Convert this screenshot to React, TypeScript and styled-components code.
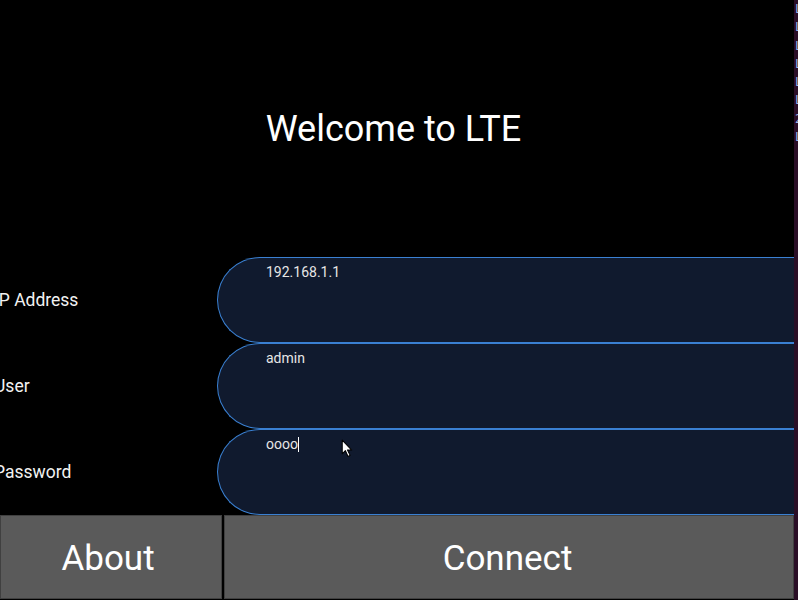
import React from "react";
import styled, { createGlobalStyle } from "styled-components";

const GlobalStyle = createGlobalStyle`
  html, body {
    margin: 0;
    padding: 0;
    background: #000;
    overflow: hidden;
  }
  body {
    font-family: Roboto, "Liberation Sans", sans-serif;
  }
`;

const Screen = styled.div`
  display: flex;
  width: 798px;
  height: 600px;
  background: #000;
  overflow: hidden;
`;

const Window = styled.div`
  position: relative;
  width: 794px;
  height: 600px;
  display: flex;
  flex-direction: column;
  overflow: hidden;
  color: #fff;
`;

const TitleArea = styled.div`
  height: 257px;
  display: flex;
  align-items: center;
  justify-content: center;
  padding-right: 7px;
  box-sizing: border-box;
`;

const Title = styled.h1`
  margin: 0;
  font-weight: 400;
  font-size: 36px;
  color: #fff;
`;

const Form = styled.div`
  display: flex;
  flex-direction: column;
`;

const Row = styled.div`
  display: flex;
  height: 86px;
`;

const Label = styled.div`
  width: 217px;
  flex-shrink: 0;
  display: flex;
  align-items: center;
  margin-left: -6px;
  font-size: 17.5px;
  color: #f2f2f2;
`;

const Field = styled.div`
  flex: 1;
  margin-left: 6px;
  margin-right: -10px;
  box-sizing: border-box;
  height: 86px;
  background: #101a2e;
  border: 1px solid #3a80d2;
  border-right: none;
  border-radius: 43px 0 0 43px;
  padding: 6px 0 0 48px;
  font-size: 14px;
  color: #e6e6e6;
`;

const Caret = styled.span`
  display: inline-block;
  width: 1px;
  height: 15px;
  background: #fff;
  vertical-align: -3px;
`;

const ButtonBar = styled.div`
  display: flex;
  gap: 2px;
  height: 84px;
`;

const Button = styled.button<{ $grow?: boolean }>`
  ${(p) => (p.$grow ? "flex: 1;" : "width: 222px;")}
  height: 84px;
  margin: 0;
  background: #5a5a5a;
  border: 1px solid #404040;
  color: #fff;
  font-family: Roboto, "Liberation Sans", sans-serif;
  font-size: 35px;
  padding: 2px ${(p) => (p.$grow ? "3px" : "6px")} 0 0;
`;

const Pointer = styled.svg`
  position: absolute;
  left: 341px;
  top: 439px;
`;

const Strip = styled.div`
  width: 4px;
  height: 600px;
  background: #2a0e26;
  overflow: hidden;
  display: flex;
  flex-direction: column;
`;

const StripLine = styled.div`
  height: 18.3px;
  line-height: 18.3px;
  margin-left: 1px;
  font-family: "DejaVu Sans Mono", monospace;
  font-size: 12px;
  color: #9fb4ea;
  white-space: nowrap;
`;

const stripLines = ["L", "L", "L", "L", "L", "L", "2", "L"];

const App = () => {
  return (
    <>
      <GlobalStyle />
      <Screen>
        <Window>
          <TitleArea>
            <Title>Welcome to LTE</Title>
          </TitleArea>
          <Form>
            <Row>
              <Label>IP Address</Label>
              <Field>192.168.1.1</Field>
            </Row>
            <Row>
              <Label>User</Label>
              <Field>admin</Field>
            </Row>
            <Row>
              <Label>Password</Label>
              <Field>
                oooo<Caret />
              </Field>
            </Row>
          </Form>
          <ButtonBar>
            <Button>About</Button>
            <Button $grow>Connect</Button>
          </ButtonBar>
          <Pointer width="13" height="19" viewBox="0 0 12 18">
            <path
              d="M1 1 L1 14 L4 11 L6.5 16.5 L8.5 15.5 L6 10.5 L10 10.5 Z"
              fill="#fff"
              stroke="#000"
              strokeWidth="1"
              strokeLinejoin="round"
            />
          </Pointer>
        </Window>
        <Strip>
          {stripLines.map((l, i) => (
            <StripLine key={i}>{l}</StripLine>
          ))}
        </Strip>
      </Screen>
    </>
  );
};

export default App;
